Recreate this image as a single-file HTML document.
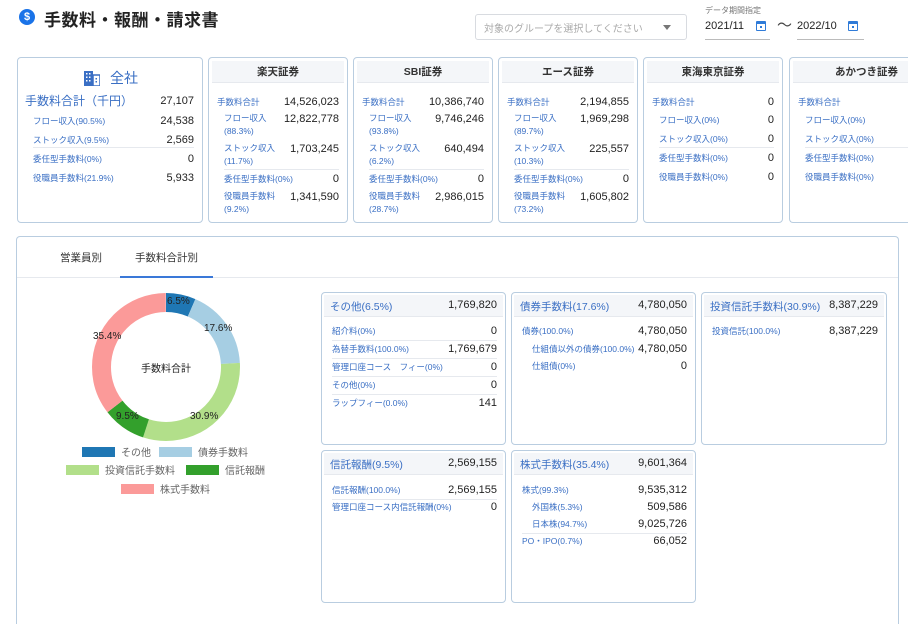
<!DOCTYPE html>
<html><head><meta charset="utf-8">
<style>
*{box-sizing:border-box;margin:0;padding:0}
html,body{width:908px;height:624px;overflow:hidden}
body{background:#fff;font-family:"Liberation Sans","Noto Sans CJK JP",sans-serif;color:#222;position:relative}
.abs{position:absolute}
.card{position:absolute;top:57px;height:166px;border:1px solid #b9cde0;border-radius:4px;background:#fff;overflow:hidden}
.hd{position:absolute;left:3px;right:3px;top:3px;height:22px;background:#f4f6f9;border-bottom:1px solid #e6e9ee;text-align:center;font-size:10.5px;font-weight:bold;line-height:22px;color:#333}
.r{position:absolute;left:8px;right:8px;height:14px;line-height:14px}
.r .l{position:absolute;left:0;font-size:8.5px;color:#3a6fc4;white-space:nowrap}
.r .l2{line-height:13px}
.r .v{position:absolute;right:0;font-size:11px;color:#222}
.in{left:15px}
.sep{position:absolute;height:1px;background:#e6e9ee}
.dc{position:absolute;border:1px solid #b9cde0;border-radius:4px;background:#fff;overflow:hidden}
.dh{position:absolute;left:2px;right:2px;top:2px;height:22px;background:#f4f6f9;border-bottom:1px solid #e6e9ee}
.dh .t{position:absolute;left:6px;top:4px;font-size:10.5px;color:#3a6fc4}
.dh .n{position:absolute;right:6px;top:4px;font-size:11px;color:#222}
.dr{position:absolute;left:10px;right:8px;height:14px;line-height:14px}
.dr .l{position:absolute;left:0;font-size:8.5px;color:#3a6fc4;white-space:nowrap}
.dr .v{position:absolute;right:0;font-size:11px}
.lg{position:absolute;font-size:10px;color:#666;line-height:12px}
.sw{display:inline-block;width:33px;height:10px;vertical-align:-1px;margin-right:6px}
</style></head><body>

<div class="abs" style="left:19px;top:9px;width:16px;height:16px;border-radius:50%;background:#1a73e8;color:#fff;font-size:11px;font-weight:bold;text-align:center;line-height:16px">$</div>
<div class="abs" style="left:44px;top:6px;font-size:17px;font-weight:bold;color:#222;letter-spacing:0.5px">手数料・報酬・請求書</div>

<div class="abs" style="left:475px;top:14px;width:212px;height:26px;border:1px solid #d8dbe0;border-radius:3px"></div>
<div class="abs" style="left:484px;top:20px;font-size:10px;color:#aaa">対象のグループを選択してください</div>
<div class="abs" style="left:663px;top:25px;width:0;height:0;border-left:4px solid transparent;border-right:4px solid transparent;border-top:5px solid #777"></div>
<div class="abs" style="left:705px;top:5px;font-size:8px;color:#777">データ期間指定</div>
<div class="abs" style="left:705px;top:20px;font-size:11px;color:#222">2021/11</div>
<div class="abs" style="left:705px;top:39px;width:65px;height:1px;background:#bbb"></div>
<div class="abs" style="left:756px;top:21px;width:10px;height:10px;border:1.5px solid #2f7bd8;border-top-width:3px;border-radius:1px"><div style="position:absolute;left:3px;top:2px;width:2px;height:2px;background:#2f7bd8"></div></div>
<div class="abs" style="left:777px;top:14px;font-size:15px;color:#444">〜</div>
<div class="abs" style="left:797px;top:20px;font-size:11px;color:#222">2022/10</div>
<div class="abs" style="left:797px;top:39px;width:67px;height:1px;background:#bbb"></div>
<div class="abs" style="left:848px;top:21px;width:10px;height:10px;border:1.5px solid #2f7bd8;border-top-width:3px;border-radius:1px"><div style="position:absolute;left:3px;top:2px;width:2px;height:2px;background:#2f7bd8"></div></div>

<div class="card" style="left:17px;width:186px">
  <div class="abs" style="left:66px;top:13px;width:16px;height:15px">
    <svg width="16" height="15" viewBox="0 0 16 15"><rect x="0" y="0" width="9" height="15" fill="#3a6fc4"/><rect x="9" y="4" width="7" height="11" fill="none" stroke="#3a6fc4" stroke-width="1.5"/><g fill="#fff"><rect x="2" y="2" width="1.5" height="1.5"/><rect x="5" y="2" width="1.5" height="1.5"/><rect x="2" y="5.5" width="1.5" height="1.5"/><rect x="5" y="5.5" width="1.5" height="1.5"/><rect x="2" y="9" width="1.5" height="1.5"/><rect x="5" y="9" width="1.5" height="1.5"/></g><rect x="11.5" y="7" width="1.5" height="1.5" fill="#3a6fc4"/><rect x="11.5" y="10" width="1.5" height="1.5" fill="#3a6fc4"/></svg>
  </div>
  <div class="abs" style="left:92px;top:10px;font-size:14px;color:#3a6fc4">全社</div>
  <div class="r" style="top:36px;left:7px"><span class="l" style="font-size:12px">手数料合計（千円）</span><span class="v">27,107</span></div>
  <div class="r in" style="top:56px"><span class="l">フロー収入(90.5%)</span><span class="v">24,538</span></div>
  <div class="r in" style="top:75px"><span class="l">ストック収入(9.5%)</span><span class="v">2,569</span></div>
  <div class="sep" style="left:15px;right:8px;top:89px"></div>
  <div class="r in" style="top:94px"><span class="l">委任型手数料(0%)</span><span class="v">0</span></div>
  <div class="r in" style="top:113px"><span class="l">役職員手数料(21.9%)</span><span class="v">5,933</span></div>
</div>

<div class="card" style="left:208px;width:140px"><div class="hd">楽天証券</div>
  <div class="r" style="top:37px"><span class="l">手数料合計</span><span class="v">14,526,023</span></div>
  <div class="r in" style="top:54px"><span class="l l2">フロー収入<br>(88.3%)</span><span class="v">12,822,778</span></div>
  <div class="r in" style="top:84px"><span class="l l2">ストック収入<br>(11.7%)</span><span class="v">1,703,245</span></div>
  <div class="sep" style="left:15px;right:8px;top:111px"></div>
  <div class="r in" style="top:114px"><span class="l">委任型手数料(0%)</span><span class="v">0</span></div>
  <div class="r in" style="top:132px"><span class="l l2">役職員手数料<br>(9.2%)</span><span class="v">1,341,590</span></div>
</div>
<div class="card" style="left:353px;width:140px"><div class="hd">SBI証券</div>
  <div class="r" style="top:37px"><span class="l">手数料合計</span><span class="v">10,386,740</span></div>
  <div class="r in" style="top:54px"><span class="l l2">フロー収入<br>(93.8%)</span><span class="v">9,746,246</span></div>
  <div class="r in" style="top:84px"><span class="l l2">ストック収入<br>(6.2%)</span><span class="v">640,494</span></div>
  <div class="sep" style="left:15px;right:8px;top:111px"></div>
  <div class="r in" style="top:114px"><span class="l">委任型手数料(0%)</span><span class="v">0</span></div>
  <div class="r in" style="top:132px"><span class="l l2">役職員手数料<br>(28.7%)</span><span class="v">2,986,015</span></div>
</div>
<div class="card" style="left:498px;width:140px"><div class="hd">エース証券</div>
  <div class="r" style="top:37px"><span class="l">手数料合計</span><span class="v">2,194,855</span></div>
  <div class="r in" style="top:54px"><span class="l l2">フロー収入<br>(89.7%)</span><span class="v">1,969,298</span></div>
  <div class="r in" style="top:84px"><span class="l l2">ストック収入<br>(10.3%)</span><span class="v">225,557</span></div>
  <div class="sep" style="left:15px;right:8px;top:111px"></div>
  <div class="r in" style="top:114px"><span class="l">委任型手数料(0%)</span><span class="v">0</span></div>
  <div class="r in" style="top:132px"><span class="l l2">役職員手数料<br>(73.2%)</span><span class="v">1,605,802</span></div>
</div>
<div class="card" style="left:643px;width:140px"><div class="hd">東海東京証券</div>
  <div class="r" style="top:37px"><span class="l">手数料合計</span><span class="v">0</span></div>
  <div class="r in" style="top:55px"><span class="l">フロー収入(0%)</span><span class="v">0</span></div>
  <div class="r in" style="top:74px"><span class="l">ストック収入(0%)</span><span class="v">0</span></div>
  <div class="sep" style="left:15px;right:8px;top:89px"></div>
  <div class="r in" style="top:93px"><span class="l">委任型手数料(0%)</span><span class="v">0</span></div>
  <div class="r in" style="top:112px"><span class="l">役職員手数料(0%)</span><span class="v">0</span></div>
</div>
<div class="card" style="left:789px;width:119px;border-right:none;border-radius:4px 0 0 4px"><div class="hd" style="right:0;width:147px">あかつき証券</div>
  <div class="r" style="top:37px"><span class="l">手数料合計</span></div>
  <div class="r in" style="top:55px"><span class="l">フロー収入(0%)</span></div>
  <div class="r in" style="top:74px"><span class="l">ストック収入(0%)</span></div>
  <div class="sep" style="left:15px;right:0;top:89px"></div>
  <div class="r in" style="top:93px"><span class="l">委任型手数料(0%)</span></div>
  <div class="r in" style="top:112px"><span class="l">役職員手数料(0%)</span></div>
</div>

<div class="abs" style="left:16px;top:236px;width:883px;height:388px;border:1px solid #b9cde0;border-bottom:none;border-radius:4px 4px 0 0"></div>
<div class="abs" style="left:17px;top:277px;width:881px;height:1px;background:#e6e9ee"></div>
<div class="abs" style="left:60px;top:250px;font-size:10.5px;color:#333">営業員別</div>
<div class="abs" style="left:135px;top:250px;font-size:10.5px;color:#333">手数料合計別</div>
<div class="abs" style="left:120px;top:276px;width:93px;height:2px;background:#3a78d8"></div>

<svg class="abs" style="left:91px;top:292px" width="150" height="150" viewBox="0 0 150 150">
  <g transform="rotate(-90 75 75)" fill="none" stroke-width="19">
    <circle cx="75" cy="75" r="64.5" stroke="#1f77b4" stroke-dasharray="26.34 500" stroke-dashoffset="0"/>
    <circle cx="75" cy="75" r="64.5" stroke="#a6cee3" stroke-dasharray="71.33 500" stroke-dashoffset="-26.34"/>
    <circle cx="75" cy="75" r="64.5" stroke="#b2df8a" stroke-dasharray="125.23 500" stroke-dashoffset="-97.67"/>
    <circle cx="75" cy="75" r="64.5" stroke="#33a02c" stroke-dasharray="38.50 500" stroke-dashoffset="-222.9"/>
    <circle cx="75" cy="75" r="64.5" stroke="#fb9a99" stroke-dasharray="143.5 500" stroke-dashoffset="-261.4"/>
  </g>
</svg>
<div class="abs" style="left:167px;top:296px;font-size:10px;color:#222">6.5%</div>
<div class="abs" style="left:204px;top:323px;font-size:10px;color:#222">17.6%</div>
<div class="abs" style="left:190px;top:411px;font-size:10px;color:#222">30.9%</div>
<div class="abs" style="left:116px;top:411px;font-size:10px;color:#222">9.5%</div>
<div class="abs" style="left:93px;top:331px;font-size:10px;color:#222">35.4%</div>
<div class="abs" style="left:141px;top:360px;font-size:10px;color:#222">手数料合計</div>

<div class="lg" style="left:82px;top:447px"><span class="sw" style="background:#1f77b4"></span>その他</div>
<div class="lg" style="left:159px;top:447px"><span class="sw" style="background:#a6cee3"></span>債券手数料</div>
<div class="lg" style="left:66px;top:465px"><span class="sw" style="background:#b2df8a"></span>投資信託手数料</div>
<div class="lg" style="left:186px;top:465px"><span class="sw" style="background:#33a02c"></span>信託報酬</div>
<div class="lg" style="left:121px;top:484px"><span class="sw" style="background:#fb9a99"></span>株式手数料</div>

<div class="dc" style="left:321px;top:292px;width:185px;height:153px">
  <div class="dh"><span class="t">その他(6.5%)</span><span class="n">1,769,820</span></div>
  <div class="dr" style="top:31px"><span class="l">紹介料(0%)</span><span class="v">0</span></div>
  <div class="sep" style="left:10px;right:8px;top:47px"></div>
  <div class="dr" style="top:49px"><span class="l">為替手数料(100.0%)</span><span class="v">1,769,679</span></div>
  <div class="sep" style="left:10px;right:8px;top:65px"></div>
  <div class="dr" style="top:67px"><span class="l">管理口座コース　フィー(0%)</span><span class="v">0</span></div>
  <div class="sep" style="left:10px;right:8px;top:83px"></div>
  <div class="dr" style="top:85px"><span class="l">その他(0%)</span><span class="v">0</span></div>
  <div class="sep" style="left:10px;right:8px;top:101px"></div>
  <div class="dr" style="top:103px"><span class="l">ラップフィー(0.0%)</span><span class="v">141</span></div>
</div>
<div class="dc" style="left:511px;top:292px;width:185px;height:153px">
  <div class="dh"><span class="t">債券手数料(17.6%)</span><span class="n">4,780,050</span></div>
  <div class="dr" style="top:31px"><span class="l">債券(100.0%)</span><span class="v">4,780,050</span></div>
  <div class="dr" style="top:49px;left:20px"><span class="l">仕組債以外の債券(100.0%)</span><span class="v">4,780,050</span></div>
  <div class="dr" style="top:66px;left:20px"><span class="l">仕組債(0%)</span><span class="v">0</span></div>
</div>
<div class="dc" style="left:701px;top:292px;width:186px;height:153px">
  <div class="dh"><span class="t">投資信託手数料(30.9%)</span><span class="n">8,387,229</span></div>
  <div class="dr" style="top:31px"><span class="l">投資信託(100.0%)</span><span class="v">8,387,229</span></div>
</div>
<div class="dc" style="left:321px;top:450px;width:185px;height:153px">
  <div class="dh"><span class="t">信託報酬(9.5%)</span><span class="n">2,569,155</span></div>
  <div class="dr" style="top:32px"><span class="l">信託報酬(100.0%)</span><span class="v">2,569,155</span></div>
  <div class="sep" style="left:10px;right:8px;top:48px"></div>
  <div class="dr" style="top:49px"><span class="l">管理口座コース内信託報酬(0%)</span><span class="v">0</span></div>
</div>
<div class="dc" style="left:511px;top:450px;width:185px;height:153px">
  <div class="dh"><span class="t">株式手数料(35.4%)</span><span class="n">9,601,364</span></div>
  <div class="dr" style="top:32px"><span class="l">株式(99.3%)</span><span class="v">9,535,312</span></div>
  <div class="dr" style="top:49px;left:20px"><span class="l">外国株(5.3%)</span><span class="v">509,586</span></div>
  <div class="dr" style="top:66px;left:20px"><span class="l">日本株(94.7%)</span><span class="v">9,025,726</span></div>
  <div class="sep" style="left:10px;right:8px;top:82px"></div>
  <div class="dr" style="top:83px"><span class="l">PO・IPO(0.7%)</span><span class="v">66,052</span></div>
</div>
</body></html>
